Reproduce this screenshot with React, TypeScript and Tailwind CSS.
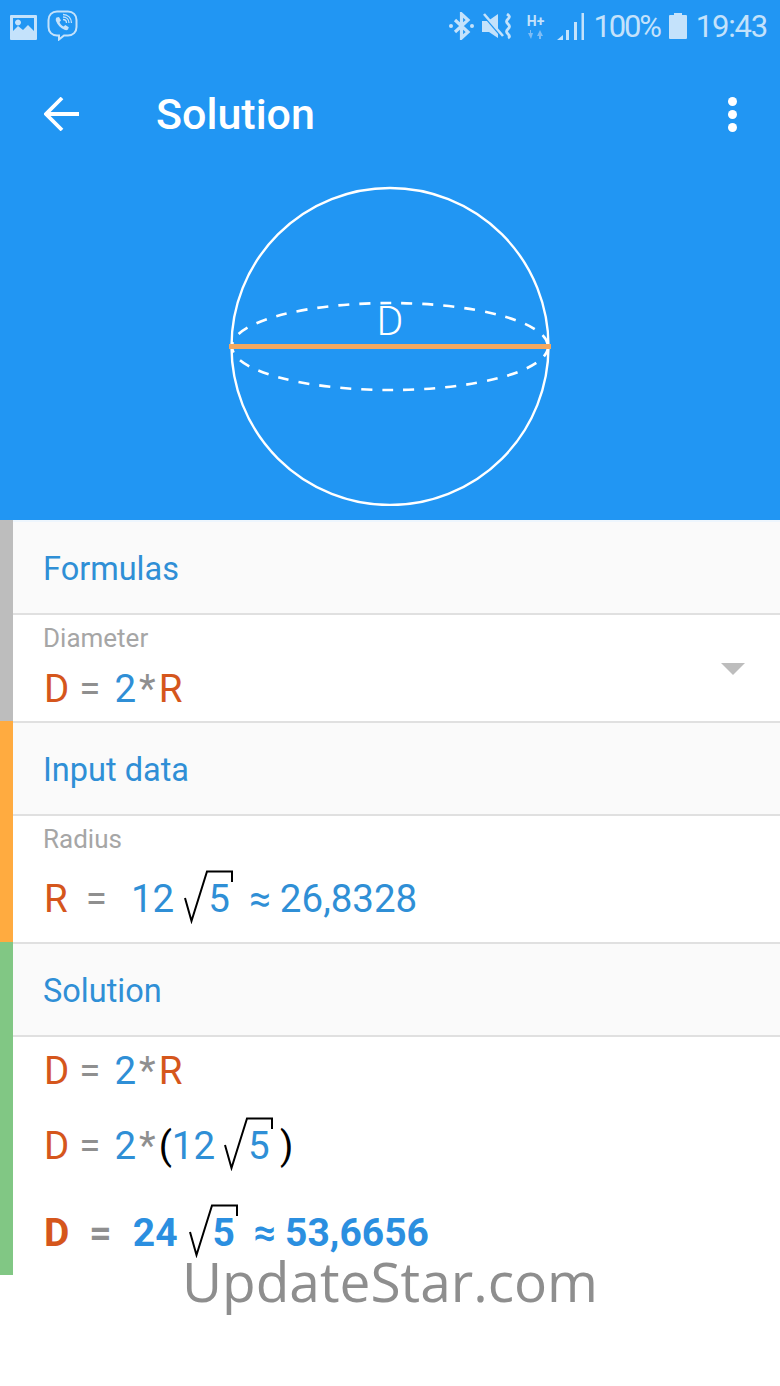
const D_COLOR = "text-[#d5561c]";

function StatusBar() {
  return (
    <div className="h-[52px] flex items-start justify-between pl-[10px] pr-[13px] pt-[10px] text-[#c4e2fb]">
      <div className="flex items-center gap-[10px]">
        <svg width="27" height="25" viewBox="0 0 27 25" className="mt-[3px]">
          <path
            fill="#c4e2fb"
            fillRule="evenodd"
            d="M1 0h25a1 1 0 0 1 1 1v23a1 1 0 0 1-1 1H1a1 1 0 0 1-1-1V1a1 1 0 0 1 1-1zM3 3v13l5-5 5 4 5-5 6 6V3zM8 4.500a3 3 0 1 0 .01 0z"
          />
        </svg>
        <svg width="31" height="31" viewBox="0 0 31 31" fill="none" stroke="#c4e2fb">
          <path
            strokeWidth="2"
            d="M10 1.500h11c5 0 8.500 3.500 8.500 8.500v7c0 5-3.500 8.500-8.500 8.500h-4l-5 4v-4h-2c-5 0-8.500-3.500-8.500-8.500v-7c0-5 3.500-8.500 8.500-8.500z"
          />
          <path
            fill="#c4e2fb"
            stroke="none"
            d="M9.500 7.500l2.500-.5 2 3.500-1.500 1.500c.8 2 2.200 3.500 4.200 4.500l1.600-1.500 3.500 2.200-.8 2.300c-1 .8-2.300.8-3.500.3-4-1.700-7-4.700-8.500-8.800-.4-1.300-.3-2.600.5-3.500z"
          />
          <path strokeWidth="1.300" d="M16 7c3.500 0 6 2.500 6 6M16 4.500c5 0 8.500 3.500 8.500 8.500M16 9.500c2 0 3.500 1.500 3.500 3.500" />
        </svg>
      </div>
      <div className="flex items-center h-[32px]">
        <svg width="25" height="28" viewBox="0 0 25 28" fill="none" stroke="#c4e2fb" strokeWidth="3.200">
          <path d="M6 8l13 12-6.500 6V2L19 8 6 20" />
          <circle cx="2" cy="14" r="2" fill="#c4e2fb" stroke="none" />
          <circle cx="23" cy="14" r="2" fill="#c4e2fb" stroke="none" />
        </svg>
        <svg width="30" height="27" viewBox="0 0 30 27" className="ml-[8px]" fill="#c4e2fb">
          <path d="M0 8h6l10-7v24L7 19H0z" />
          <path d="M2 3l18 21" stroke="#2196f3" strokeWidth="2" />
          <path d="M2 1l19 22" stroke="#c4e2fb" strokeWidth="2.600" />
          <path d="M25 1c3 2 3 3 1 5s-2 3 0 5 2 3 0 5-2 3 0 5 2 3 0 4" fill="none" stroke="#c4e2fb" strokeWidth="2.800" />
        </svg>
        <div className="ml-[14px] w-[20px] flex flex-col items-center leading-none">
          <span className="text-[14px] font-bold leading-[15px] font-['Roboto',sans-serif]">H+</span>
          <svg width="16" height="9" viewBox="0 0 16 9" fill="#7fbdf5" className="mt-[1px]">
            <path d="M3 0v3h2L3 9 0 3h2V0zM12 0l3 6h-2v3h-2V6H9z" />
          </svg>
        </div>
        <svg width="27" height="27" viewBox="0 0 27 27" className="ml-[11px]" fill="#c4e2fb">
          <path d="M0 27l6-5v5zM9 17h3v10H9zM17 9h3v18h-3zM24.500 0h2.500v27h-2.500z" />
        </svg>
        <span className="ml-[10px] text-[31px] leading-none tracking-[-2.200px] font-['Roboto',sans-serif]">100%</span>
        <svg width="18" height="26" viewBox="0 0 18 26" className="ml-[9px]" fill="#c4e2fb">
          <path d="M5 0h8v2h4a1 1 0 0 1 1 1v22a1 1 0 0 1-1 1H1a1 1 0 0 1-1-1V3a1 1 0 0 1 1-1h4z" />
        </svg>
        <span className="ml-[9px] text-[31px] leading-none tracking-[-1.200px] font-['Roboto',sans-serif]">19:43</span>
      </div>
    </div>
  );
}

function Toolbar() {
  return (
    <div className="h-[124px] flex items-center pl-[44px] pr-[43px] text-white">
      <svg width="35" height="34" viewBox="0 0 35 34" fill="none" stroke="white" strokeWidth="3.800">
        <path d="M35 17H3M18 1L2 17l16 16" />
      </svg>
      <h1 className="ml-[77px] flex-1 text-[43px] font-medium font-['Roboto',sans-serif]">Solution</h1>
      <div className="flex flex-col gap-[4px]">
        <span className="w-[9px] h-[9px] rounded-full bg-white" />
        <span className="w-[9px] h-[9px] rounded-full bg-white" />
        <span className="w-[9px] h-[9px] rounded-full bg-white" />
      </div>
    </div>
  );
}

function Sphere() {
  return (
    <div className="flex justify-center mt-[10px]">
      <svg width="322" height="320" viewBox="0 0 322 320" fill="none">
        <circle cx="161" cy="160.500" r="158.500" stroke="white" strokeWidth="2.400" />
        <ellipse cx="161" cy="160.500" rx="158" ry="43.500" stroke="white" strokeWidth="2.600" strokeDasharray="11 10" />
        <text x="161" y="149" fill="white" fontSize="41" textAnchor="middle" fontFamily="Roboto, sans-serif" fontWeight="300">
          D
        </text>
        <line x1="0" y1="160.500" x2="322" y2="160.500" stroke="#f3a860" strokeWidth="5" />
      </svg>
    </div>
  );
}

function Radical({ digit, className }: { digit: string; className: string }) {
  return (
    <span className={"relative inline-block w-[50px] pl-[24px] " + className}>
      {digit}
      <svg width="50" height="56" viewBox="0 0 50 56" fill="none" stroke="black" strokeWidth="2" className="absolute left-0 -top-[9px]">
        <path d="M1 30l6.500 23L23 3.500h25V14" />
      </svg>
    </span>
  );
}

function SectionHeader({ title }: { title: string }) {
  return (
    <div className="h-[87px] pt-[4px] bg-[#fafafa] border-b-2 border-[#e0e0e0] box-content flex items-center pl-[30px] text-[32.500px] text-[#2f8fd6]">
      {title}
    </div>
  );
}

function Label({ children }: { children: string }) {
  return <div className="pl-[30px] pt-[9px] text-[26px] leading-[28px] text-[#a6a6a6]">{children}</div>;
}

function SimpleFormula() {
  return (
    <>
      <span className={D_COLOR}>D</span>
      <span className="ml-[10px] text-[#8f8f8f]">=</span>
      <span className="ml-[14px] text-[#2f8fd6]">2</span>
      <span className="ml-[3px] text-[#8f8f8f]">*</span>
      <span className={"ml-[3px] " + D_COLOR}>R</span>
    </>
  );
}

export default function App() {
  return (
    <div className="relative min-h-[1386px] bg-white font-['Roboto',sans-serif]">
      <header className="h-[520px] bg-[#2196f3]">
        <StatusBar />
        <Toolbar />
        <Sphere />
      </header>

      <section className="flex h-[201px]">
        <div className="w-[13px] bg-[#bdbdbd]" />
        <div className="flex-1">
          <div className="h-[2px] bg-[#eef6fd]" />
          <SectionHeader title="Formulas" />
          <div className="flex items-center justify-between pr-[35px]">
            <div>
              <Label>Diameter</Label>
              <div className="pl-[31px] mt-[15px] flex items-baseline text-[38.500px] leading-[44px]">
                <SimpleFormula />
              </div>
            </div>
            <svg width="24" height="12" viewBox="0 0 24 12" fill="#bdbdbd" className="mt-[12px]">
              <path d="M0 0h24L12 12z" />
            </svg>
          </div>
        </div>
      </section>

      <section className="flex h-[221px]">
        <div className="w-[13px] bg-[#ffab40]" />
        <div className="flex-1">
          <div className="h-[2px] bg-[#e0e0e0]" />
          <SectionHeader title="Input data" />
          <Label>Radius</Label>
          <div className="pl-[31px] mt-[24px] flex items-baseline text-[38.500px] leading-[44px]">
            <span className={D_COLOR}>R</span>
            <span className="ml-[18px] text-[#8f8f8f]">=</span>
            <span className="ml-[24px] text-[#2f8fd6]">12</span>
            <Radical digit="5" className="ml-[10px] text-[#2f8fd6]" />
            <span className="ml-[15px] text-[#2f8fd6]">≈</span>
            <span className="ml-[9px] text-[#2f8fd6]">26,8328</span>
          </div>
        </div>
      </section>

      <section className="flex h-[333px]">
        <div className="w-[13px] bg-[#81c784]" />
        <div className="flex-1">
          <div className="h-[2px] bg-[#e0e0e0]" />
          <SectionHeader title="Solution" />
          <div className="pl-[31px] pt-[12px] flex items-baseline text-[38.500px] leading-[44px]">
            <SimpleFormula />
          </div>
          <div className="pl-[31px] mt-[31px] flex items-baseline text-[38.500px] leading-[44px]">
            <span className={D_COLOR}>D</span>
            <span className="ml-[10px] text-[#8f8f8f]">=</span>
            <span className="ml-[14px] text-[#2f8fd6]">2</span>
            <span className="ml-[3px] text-[#8f8f8f]">*</span>
            <span className="ml-[3px] text-black">(</span>
            <span className="text-[#2f8fd6]">12</span>
            <Radical digit="5" className="ml-[9px] text-[#2f8fd6]" />
            <span className="ml-[6px] text-black">)</span>
          </div>
          <div className="pl-[31px] mt-[43px] flex items-baseline text-[39px] leading-[44px] font-bold">
            <span className={D_COLOR}>D</span>
            <span className="ml-[20px] text-[#8f8f8f]">=</span>
            <span className="ml-[21px] text-[#2b8fe0]">24</span>
            <Radical digit="5" className="ml-[11px] text-[#2b8fe0]" />
            <span className="ml-[15px] text-[#2b8fe0]">≈</span>
            <span className="ml-[9px] text-[#2b8fe0]">53,6656</span>
          </div>
        </div>
      </section>

      <div className="absolute inset-x-0 top-[1244px] text-center text-[55px] leading-[74px] text-[#8e8e8e] font-['Open_Sans',sans-serif]">
        UpdateStar.com
      </div>
    </div>
  );
}
